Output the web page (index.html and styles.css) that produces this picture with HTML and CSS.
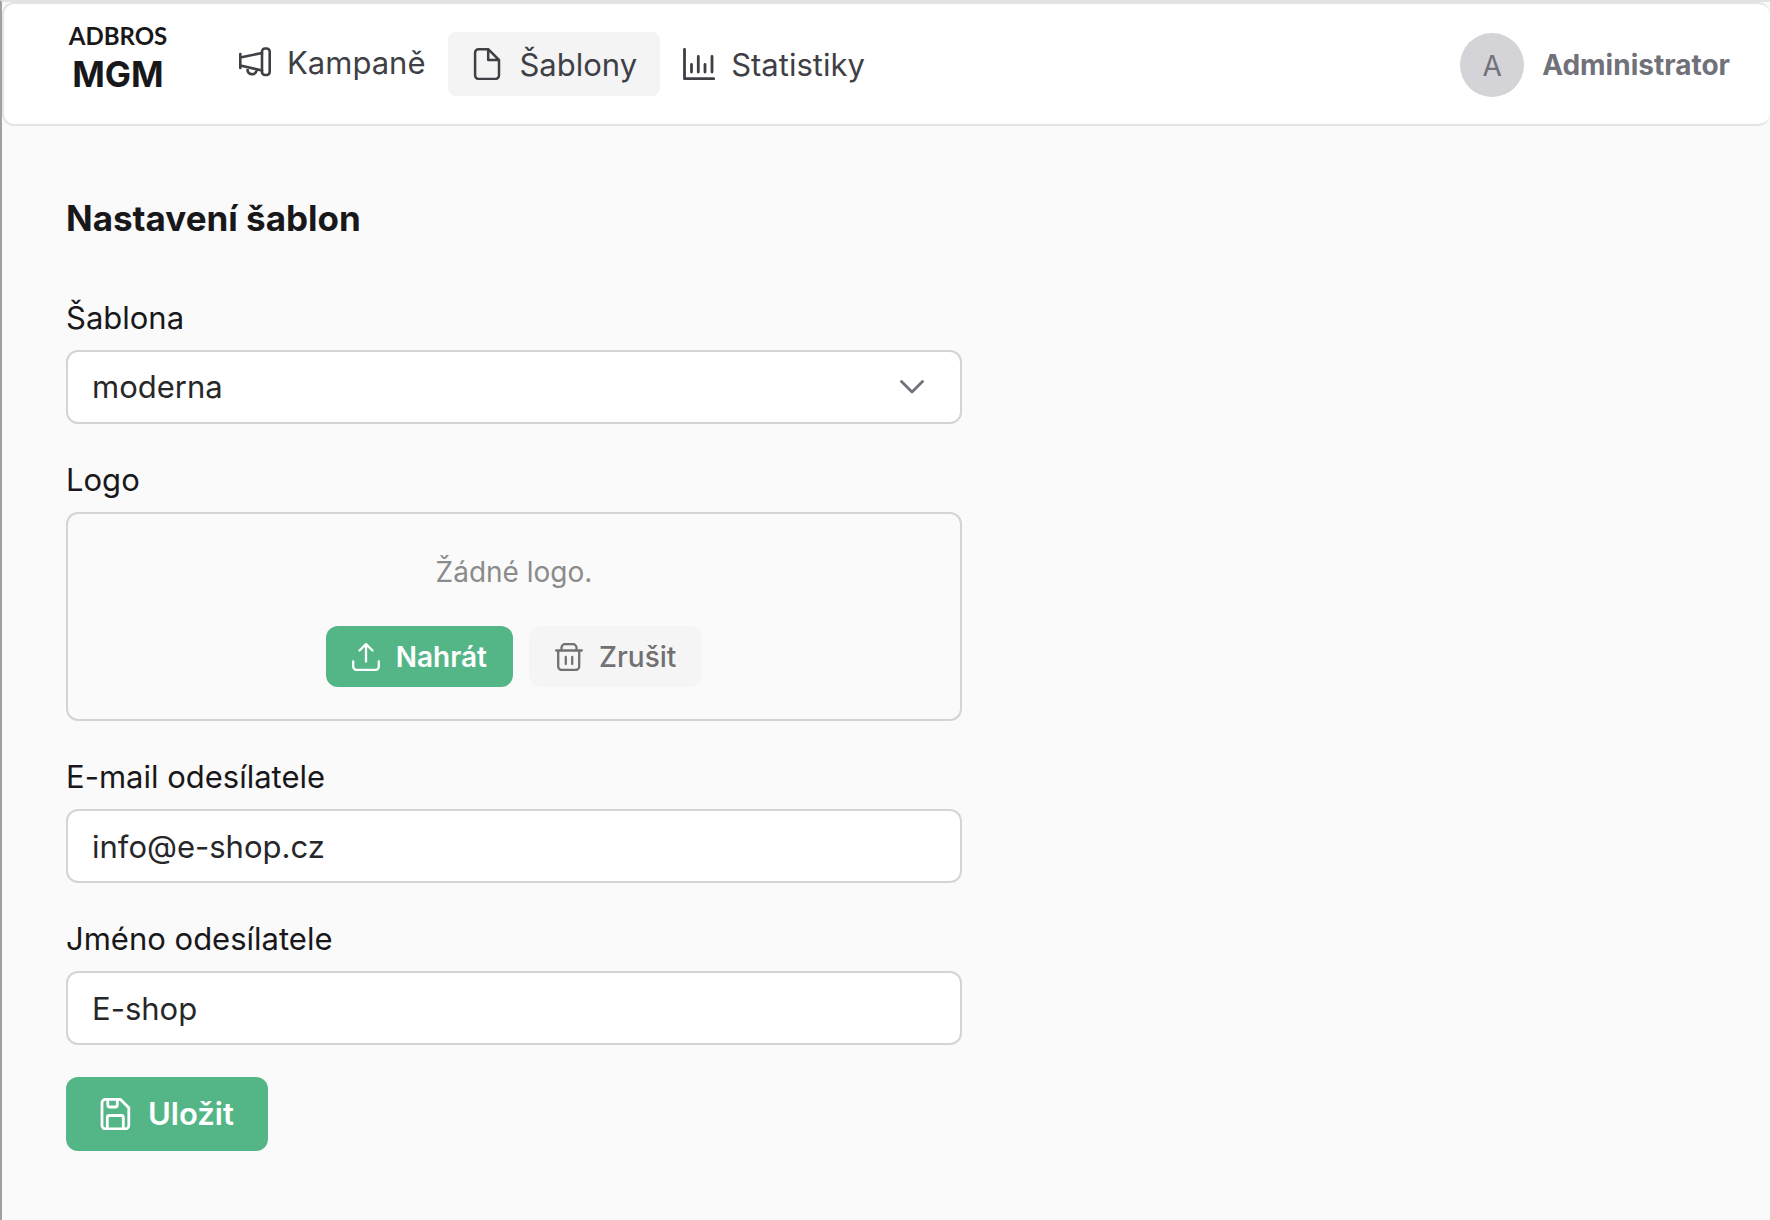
FILE: index.html
```html
<!DOCTYPE html>
<html lang="cs">
<head>
<meta charset="utf-8">
<meta name="viewport" content="width=device-width, initial-scale=1">
<title>Nastavení šablon</title>
<link rel="stylesheet" href="styles.css">
</head>
<body>
<header class="topbar">
  <a class="brand" href="#"><span class="brand-name">ADBROS</span><span class="brand-product">MGM</span></a>
  <nav class="nav">
    <a class="nav-item nav-item-raised" href="#">
      <svg class="icon-lg" viewBox="0 0 32 32" fill="none" stroke="currentColor" stroke-width="2.6" stroke-linecap="round" stroke-linejoin="round"><rect x="23" y="2.500" width="7.700" height="26.500" rx="3"/><path d="M1.300 8v14M1.300 11.500 23 7M1.300 19.500 23 24.500M8.500 23v.8a4.600 4.600 0 0 0 8.800 1.700"/></svg>
      <span>Kampaně</span>
    </a>
    <a class="nav-item nav-item-active" href="#" aria-current="page">
      <svg class="icon-lg" viewBox="0 0 32 32" fill="none" stroke="currentColor" stroke-width="2.500" stroke-linecap="round" stroke-linejoin="round"><path d="M7.500 1.200h9.700L28 12v15.500a3.400 3.400 0 0 1-3.400 3.400H7.500A3.400 3.400 0 0 1 4.100 27.500v-23a3.400 3.400 0 0 1 3.400-3.300ZM17.200 1.500V12H28"/></svg>
      <span>Šablony</span>
    </a>
    <a class="nav-item" href="#">
      <svg class="icon-lg" viewBox="0 0 32 32" fill="none" stroke="currentColor" stroke-width="2.800" stroke-linecap="round" stroke-linejoin="round"><path d="M1.500 1.300v29.400h29.200M8.500 16.500v7.500M15.300 8.500v15.500M22 16.500v7.500M29 8.500v15.500"/></svg>
      <span>Statistiky</span>
    </a>
  </nav>
  <div class="account"><span class="avatar">A</span><span>Administrator</span></div>
</header>
<main class="page">
  <h1 class="page-title">Nastavení šablon</h1>
  <form class="form">
    <div class="field">
      <label class="label" for="template">Šablona</label>
      <div class="select-wrap">
        <select class="control" id="template"><option>moderna</option></select>
        <svg class="chevron" viewBox="0 0 24 14" fill="none" stroke="currentColor" stroke-width="2.800" stroke-linecap="round" stroke-linejoin="round"><path d="m1.500 1.500 10.500 10.500L22.500 1.500"/></svg>
      </div>
    </div>
    <div class="field">
      <span class="label" id="logo-label">Logo</span>
      <div class="logo-box" role="group" aria-labelledby="logo-label">
        <p class="logo-empty">Žádné logo.</p>
        <div class="logo-actions">
          <button class="button button-primary" type="button">
            <svg class="icon" viewBox="0 0 28 28" fill="none" stroke="currentColor" stroke-width="2.300" stroke-linecap="round" stroke-linejoin="round"><path d="M1.200 18.500v5A3.500 3.500 0 0 0 4.700 27h18.600a3.500 3.500 0 0 0 3.500-3.500v-5M14 18.500V1.200M7.500 7.500 14 1.200l6.500 6.300"/></svg>
            Nahrát
          </button>
          <button class="button button-muted" type="button">
            <svg class="icon" viewBox="0 0 28 28" fill="none" stroke="currentColor" stroke-width="2.300" stroke-linecap="round" stroke-linejoin="round"><path d="M1.200 7.500h25.600M3.200 7.500v16A3.500 3.500 0 0 0 6.700 27h14a3.500 3.500 0 0 0 3.500-3.500v-16M6.500 7.500v-2.800A3.500 3.500 0 0 1 10 1.200h8a3.500 3.500 0 0 1 3.500 3.500v2.800M10.800 14v7M17.200 14v7"/></svg>
            Zrušit
          </button>
        </div>
      </div>
    </div>
    <div class="field">
      <label class="label" for="email">E-mail odesílatele</label>
      <input class="control" id="email" type="email" value="info@e-shop.cz">
    </div>
    <div class="field">
      <label class="label" for="name">Jméno odesílatele</label>
      <input class="control" id="name" type="text" value="E-shop">
    </div>
    <button class="button button-primary button-large" type="submit">
      <svg class="icon-lg" viewBox="0 0 32 32" fill="none" stroke="currentColor" stroke-width="2.800" stroke-linecap="round" stroke-linejoin="round"><path d="M5.400 1.400H20.500L28.800 9.800v17.600a3.400 3.400 0 0 1-3.400 3.400H5.400A3.400 3.400 0 0 1 2 27.400V4.800A3.400 3.400 0 0 1 5.400 1.400ZM7.800 1.500v5.500a2 2 0 0 0 2 2h5.500a2 2 0 0 0 2-2V1.500M7.300 30.500V19.500a2 2 0 0 1 2-2H21.300a2 2 0 0 1 2 2v11"/></svg>
      Uložit
    </button>
  </form>
</main>
</body>
</html>
```
FILE: styles.css
```css
* {
  box-sizing: border-box;
}

body {
  margin: 0;
  min-height: 100vh;
  border-top: 2px solid #e2e2e2;
  border-left: 2px solid #a1a1a3;
  background: #fafafa;
  color: #18181b;
  font: 400 31px/48px Inter, "Liberation Sans", sans-serif;
}

a {
  color: inherit;
  text-decoration: none;
}

svg {
  flex: none;
}

.topbar {
  display: flex;
  align-items: flex-start;
  padding: 20px 40px 26px 62px;
  border: 2px solid #e4e4e7;
  border-right: 0;
  border-radius: 12px;
  background: #fff;
}

.brand {
  display: flex;
  flex-direction: column;
  align-items: center;
  gap: 2px;
  width: 104px;
}

.brand-name {
  font: 700 24px/24px Lato, sans-serif;
}

.brand-product {
  font-size: 35px;
  font-weight: 700;
  line-height: 48px;
}

.nav {
  display: flex;
  margin: 8px 0 0 46px;
  color: #3f3f46;
}

.nav-item {
  display: flex;
  align-items: center;
  gap: 16px;
  height: 64px;
  padding: 0 23px;
  border-radius: 8px;
}

.nav-item span {
  padding-top: 2px;
}

.nav-item-raised {
  height: 60px;
}

.nav-item-active {
  background: #f4f4f4;
}

.icon-lg {
  width: 32px;
  height: 32px;
}

.icon {
  width: 28px;
  height: 28px;
}

.account {
  display: flex;
  align-items: center;
  gap: 18px;
  margin: 8px 0 0 auto;
  color: #71717a;
  font-size: 28px;
  line-height: 66px;
  font-weight: 700;
}

.avatar {
  width: 64px;
  height: 64px;
  border-radius: 50%;
  background: #d4d4d8;
  font-weight: 400;
  text-align: center;
}

.page {
  padding: 64px;
}

.page-title {
  margin: 0 0 48px;
  font-size: 35px;
  font-weight: 700;
  line-height: 56px;
}

.form {
  display: flex;
  flex-direction: column;
  align-items: flex-start;
  gap: 32px;
  max-width: 896px;
}

.field {
  display: flex;
  flex-direction: column;
  gap: 8px;
  width: 100%;
}

.select-wrap {
  position: relative;
}

.control {
  display: block;
  width: 100%;
  height: 74px;
  margin: 0;
  padding: 0 24px;
  border: 2px solid #d4d4d8;
  border-radius: 12px;
  background: #fff;
  color: #27272a;
  font: inherit;
  appearance: none;
}

.chevron {
  position: absolute;
  top: 30px;
  right: 38px;
  width: 24px;
  height: 14px;
  color: #71717a;
  pointer-events: none;
}

.logo-box {
  display: flex;
  flex-direction: column;
  align-items: center;
  gap: 32px;
  padding: 36px 24px 32px;
  border: 2px solid #d4d4d8;
  border-radius: 12px;
}

.logo-empty {
  margin: 0;
  color: #8b8b8b;
  font-size: 28px;
  line-height: 44px;
}

.logo-actions {
  display: flex;
  gap: 16px;
}

.button {
  display: flex;
  align-items: center;
  gap: 16px;
  height: 61px;
  padding: 0 26px;
  border: 0;
  border-radius: 12px;
  font: 600 28px/40px Inter, "Liberation Sans", sans-serif;
}

.button-primary {
  background: #54b687;
  color: #fff;
}

.button-muted {
  background: #f5f5f6;
  color: #717171;
  font-weight: 500;
}

.button-large {
  height: 74px;
  padding: 0 34px;
  font-size: 31px;
}
```
